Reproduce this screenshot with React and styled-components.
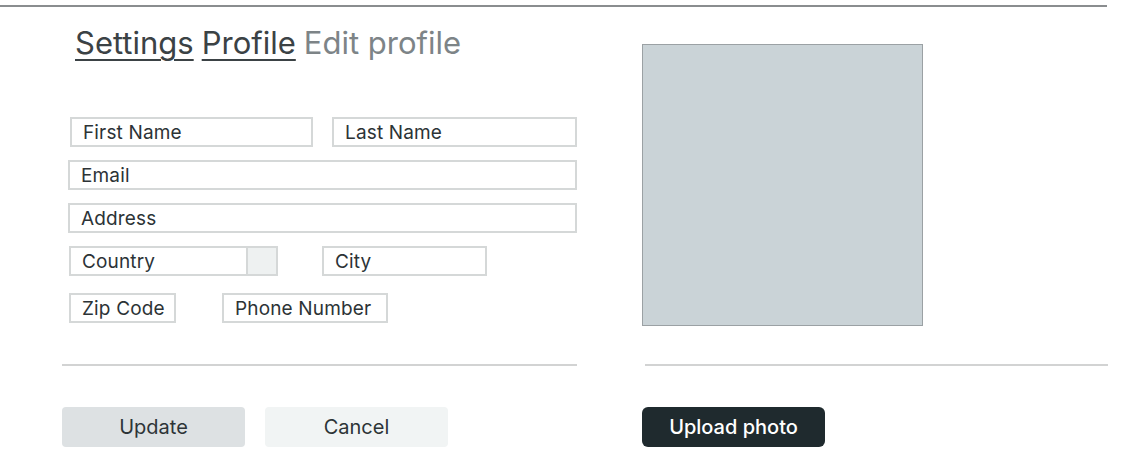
import styled, { createGlobalStyle } from "styled-components";

const GlobalStyle = createGlobalStyle`
  body {
    margin: 0;
    background: #ffffff;
    font-family: "Inter", "Noto Sans", sans-serif;
    color: #2c3336;
  }
`;

const TopRule = styled.div`
  width: 1107px;
  margin-top: 5px;
  border-top: 2px solid #8a8d8f;
`;

const Layout = styled.div`
  display: grid;
  grid-template-columns: 515px 466px;
  column-gap: 65px;
  padding-left: 62px;
`;

const Column = styled.div`
  display: flex;
  flex-direction: column;
  height: 357px;
`;

const Title = styled.h1`
  margin: 17px 0 0 13px;
  font-size: 31px;
  line-height: 37px;
  font-weight: 400;
  color: #7d8487;
`;

const Crumb = styled.a`
  color: #3b4245;
  text-decoration: underline;
  text-decoration-thickness: 2px;
  text-underline-offset: 5px;
  margin-right: 8px;
`;

const Form = styled.form`
  display: flex;
  flex-direction: column;
  gap: 13px;
  margin: 56px 0 0 6px;
`;

const Row = styled.div`
  display: flex;
  gap: ${(p) => p.$gap || 19}px;
  padding-left: ${(p) => p.$inset || 0}px;
  margin-top: ${(p) => p.$top || 0}px;
`;

const Field = styled.input`
  box-sizing: border-box;
  width: ${(p) => p.$w}px;
  height: 30px;
  border: 2px solid #d5d8d8;
  padding: 0 2px 0 11px;
  font-family: inherit;
  font-size: 19px;
  letter-spacing: 0.15px;
  color: #2c3336;
  background: #fff;
  outline: none;
  &::placeholder {
    color: #2c3336;
    opacity: 1;
  }
`;

const Select = styled.div`
  box-sizing: border-box;
  width: ${(p) => p.$w}px;
  height: 30px;
  border: 2px solid #d5d8d8;
  display: flex;
  align-items: center;
  font-size: 19px;
  letter-spacing: 0.15px;
  color: #2c3336;
`;

const SelectLabel = styled.span`
  flex: 1;
  padding-left: 11px;
`;

const SelectHandle = styled.span`
  width: 28px;
  height: 100%;
  border-left: 2px solid #d5d8d8;
  background: #eef1f1;
`;

const Divider = styled.hr`
  margin: 0 0 0 ${(p) => p.$inset || 0}px;
  border: none;
  border-top: 2px solid #d2d3d3;
`;

const Actions = styled.div`
  display: flex;
  gap: 20px;
  margin-top: 41px;
`;

const Button = styled.button`
  width: ${(p) => p.$w}px;
  height: 40px;
  border: none;
  border-radius: ${(p) => (p.$dark ? 6 : 4)}px;
  font-family: inherit;
  font-size: 20px;
  font-weight: ${(p) => (p.$dark ? 500 : 400)};
  background: ${(p) => p.$bg};
  color: ${(p) => (p.$dark ? "#ffffff" : "#2d3437")};
  cursor: pointer;
`;

const Photo = styled.div`
  margin-top: 37px;
  width: 281px;
  height: 282px;
  box-sizing: border-box;
  border: 1px solid #9ba1a4;
  background: #cad3d7;
`;

export default function App() {
  return (
    <>
      <GlobalStyle />
      <TopRule />
      <Layout>
        <Column>
          <Title>
            <Crumb>Settings</Crumb>
            <Crumb>Profile</Crumb>
            Edit profile
          </Title>
          <Form>
            <Row $inset={2}>
              <Field $w={243} placeholder="First Name" />
              <Field $w={245} placeholder="Last Name" />
            </Row>
            <Row>
              <Field $w={509} placeholder="Email" />
            </Row>
            <Row>
              <Field $w={509} placeholder="Address" />
            </Row>
            <Row $gap={44} $inset={1}>
              <Select $w={209}>
                <SelectLabel>Country</SelectLabel>
                <SelectHandle />
              </Select>
              <Field $w={165} placeholder="City" />
            </Row>
            <Row $gap={46} $inset={1} $top={4}>
              <Field $w={107} placeholder="Zip Code" />
              <Field $w={166} placeholder="Phone Number" />
            </Row>
          </Form>
        </Column>
        <Column>
          <Photo />
        </Column>
        <Divider />
        <Divider $inset={3} />
        <Actions>
          <Button $w={183} $bg="#dde1e3">Update</Button>
          <Button $w={183} $bg="#f1f4f4">Cancel</Button>
        </Actions>
        <Actions>
          <Button $w={183} $bg="#1f2a2e" $dark>Upload photo</Button>
        </Actions>
      </Layout>
    </>
  );
}
